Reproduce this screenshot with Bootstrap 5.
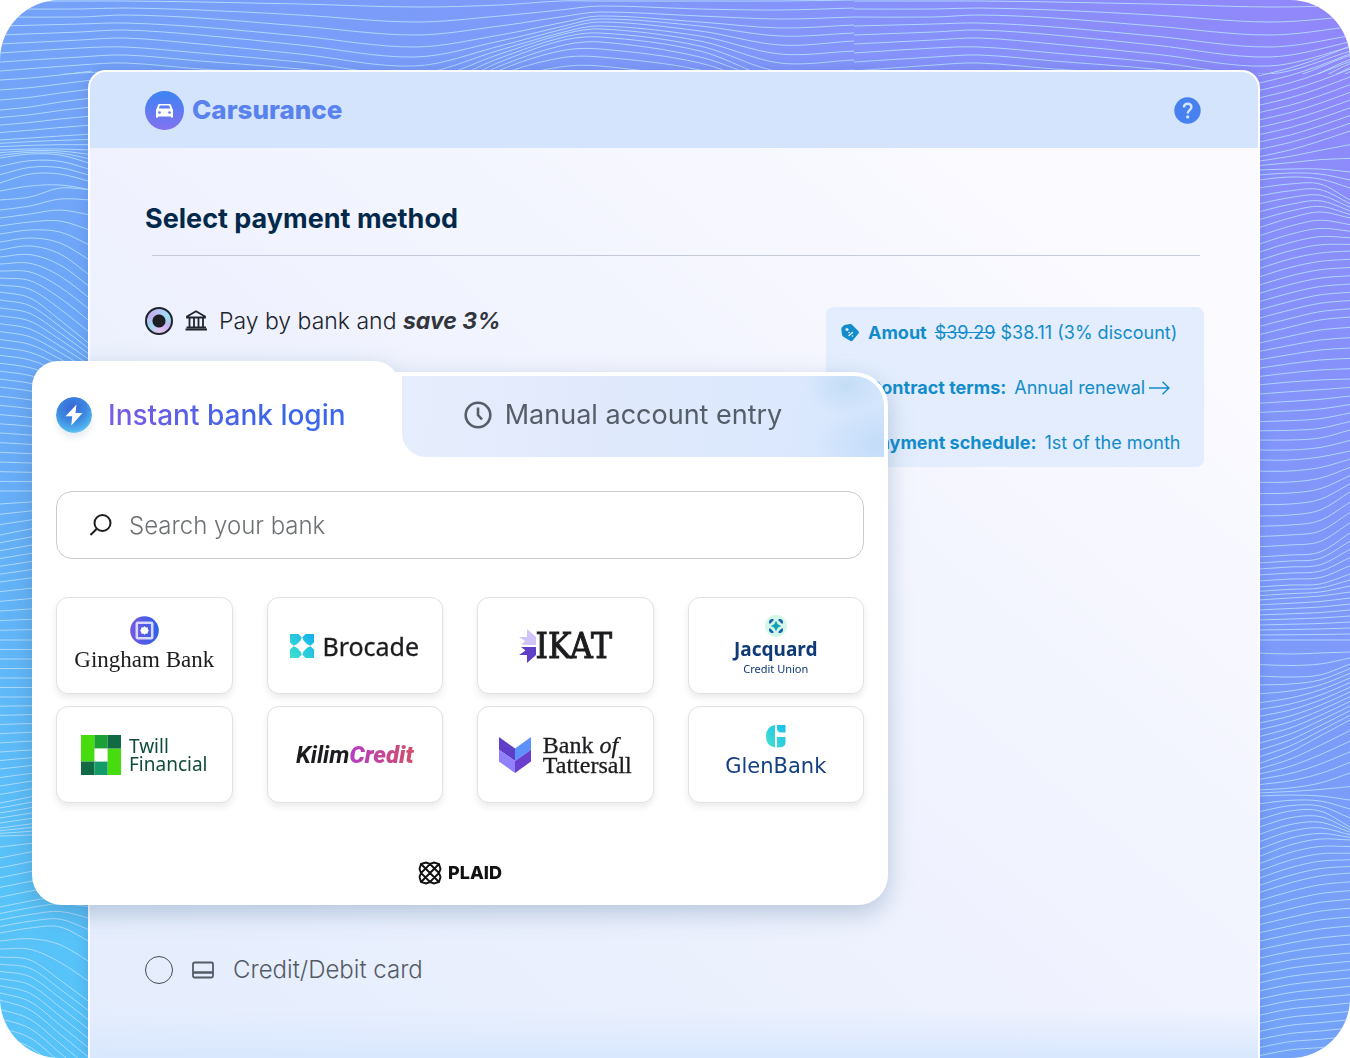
<!DOCTYPE html>
<html lang="en">
<head>
<meta charset="utf-8">
<meta name="viewport" content="width=device-width, initial-scale=1">
<title>Carsurance – Select payment method</title>
<link href="https://cdn.jsdelivr.net/npm/bootstrap@5.3.0/dist/css/bootstrap.min.css" rel="stylesheet">
<style>
  body { font-family: Inter, "Liberation Sans", sans-serif; background: #fff; color: #20242c; }
  button { font-family: inherit; }
  .stage { min-height: 100vh; padding: 70px 90px 0 88px; border-radius: 60px; overflow: hidden; isolation: isolate;
    background: linear-gradient(to bottom left, #9286fb 0%, #8098fa 28%, #74a2f8 50%, #6aabf8 70%, #57c3f8 92%); }
  .waves { inset: 0; width: 100%; height: 100%; z-index: -1; }
  .waves path { fill: none; stroke: #b8e0fd; stroke-opacity: .85; stroke-width: 1; }
  .sheet { min-height: calc(100vh - 70px); border: 2px solid #fff; border-bottom: 0; border-radius: 18px 18px 0 0;
    background: linear-gradient(to top, #d9e8fe 0, #d9e8fe00 50px), linear-gradient(to top right, #e4edfd 0%, #eff2fe 45%, #fafaff 85%);
    box-shadow: 0 0 14px #3c5fb040; }
  .topbar { height: 76px; padding: 0 57px 0 55px; background: #d4e4fd; border-radius: 16px 16px 0 0; }
  .brand { font: 800 26px/36px Inter, sans-serif; color: #5a82ee; }
  .content { padding: 49px 54px 0 55px; }
  .title { font: 700 27px/44px Inter, sans-serif; color: #03294a; }
  .rule { margin: 14px 4px 0 7px; border-top: 1px solid #b9bfd0; opacity: .8; }
  .method-row { height: 105px; padding-top: 51px; }
  .method { font-size: 23px; line-height: 26px; font-weight: 300; }
  .method .form-check-input { width: 28px; height: 28px; margin: 0; border: 1px solid #444b57; background-color: transparent; }
  .method .form-check-input:checked { border: 2px solid #20242c; box-shadow: none;
    background: radial-gradient(circle, #1c1f24 0 6px, transparent 7px), conic-gradient(#b9c4f4, #9be0f2, #c7b2f2, #e6c5ee, #9ad9f0, #c3b0f0, #b9c4f4); }
  .muted-method { font-size: 24px; color: #555b66; padding: 51px 0 72px; }
  .save { font-weight: 700; color: #33363d; }
  .terms { margin: 0 0 -105px; padding: 12px 14px; height: 160px; width: 378px; border-radius: 8px; color: #128cca;
    background: #e3edfd; font-size: 18px; line-height: 28px; gap: 27px; }
  .terms dt { font-weight: 700; }
  .terms dd { margin: 0; }
  .terms a { color: inherit; text-decoration: none; }
  .widget { margin-left: -113px; width: 856px; z-index: 1; filter: drop-shadow(0 8px 12px #41699150); }
  .tab { border: 0; line-height: 36px; }
  .tab-on { width: 368px; height: 96px; padding: 11px 24px 0; gap: 16px; background: #fff; border-radius: 26px 26px 0 0; font-size: 28px; font-weight: 500; }
  .tab-on .label { background: linear-gradient(90deg, #7a5be6, #4064e6 60%, #3c68ea); -webkit-background-clip: text; background-clip: text; color: transparent; }
  .bolt { width: 36px; height: 36px; border-radius: 50%; box-shadow: 0 5px 6px #5a7a9a22; }
  .tab-wrap { margin-left: -12px; padding: 4px 4px 0 14px; background: #fff; border-radius: 0 34px 0 0; height: 85px; }
  .tab-off { height: 81px; gap: 13px; padding: 0 40px 4px 0; color: #555d67; font-size: 27px; border-radius: 0 30px 0 24px;
    background: radial-gradient(40px 30px at 92% 12%, #c3ddf6, #c3ddf600), radial-gradient(70px 40px at 100% 85%, #c3dcf9, #c3dcf900), linear-gradient(100deg, #e6eefd 0%, #e2eafc 30%, #dbe8fd 80%, #d3e5fc 100%); }
  .pane { padding: 34px 24px 20px; background: #fff; border-radius: 0 0 30px 30px; }
  .search { height: 68px; border: 1px solid #c7cccd; border-radius: 16px; padding: 0 32px; gap: 15px; }
  .search input { border: 0; padding: 2px 0 0; font-size: 24px; font-weight: 300; background: none; box-shadow: none !important; }
  .search input::placeholder { color: #6d7173; }
  .banks { display: grid; grid-template-columns: repeat(4, 1fr); gap: 12px 34px; margin-top: 38px; }
  .bank { height: 97px; padding: 0; background: #fff; border: 1px solid #dfe1e3; border-radius: 12px; box-shadow: 0 4px 7px #00000014; color: #1b1c1e; }
  .gingham { font: 23px/30px "Liberation Serif", serif; }
  .brocade { font: 25px/36px "Noto Sans", sans-serif; -webkit-text-stroke: .3px; }
  .ikat { font: 35px/40px "DejaVu Serif Condensed", "DejaVu Serif", serif; -webkit-text-stroke: 1px; }
  .jacquard { font: 700 19px/24px "Noto Sans", sans-serif; color: #0e3a78; }
  .union { font: 11px/16px "Noto Sans", sans-serif; color: #0e3a78; }
  .twill { font: 19px/18px "Noto Sans", sans-serif; color: #0f4a3c; }
  .kilim { font: italic 700 24px/30px Roboto, sans-serif; }
  .kilim b { background: linear-gradient(90deg, #b63bc4, #d0506a); -webkit-background-clip: text; background-clip: text; color: transparent; }
  .tatter { font: 24px/20px "Liberation Serif", serif; -webkit-text-stroke: .3px; }
  .glen { font: 21px/28px "DejaVu Sans", sans-serif; color: #143f80; }
  .powered { margin-top: 58px; gap: 6px; font: 800 18px/24px Inter, sans-serif; color: #111; }
</style>
</head>
<body>
<main class="stage position-relative">
  <svg class="waves position-absolute" viewBox="0 0 1350 1058" preserveAspectRatio="none" aria-hidden="true">
    <defs>
      <clipPath id="tileA"><rect x="0" y="0" width="854" height="74"/></clipPath>
      <clipPath id="tileB"><rect x="854" y="0" width="496" height="74"/></clipPath>
    </defs>
    <g id="waveA" clip-path="url(#tileA)"></g>
    <g id="waveB" clip-path="url(#tileB)"></g>
    <g id="waveL"></g>
    <g id="waveR"></g>
  </svg>

  <div class="sheet d-flex flex-column">
    <header class="topbar d-flex align-items-center justify-content-between">
      <a href="#" class="d-flex align-items-center text-decoration-none gap-2">
        <svg width="39" height="39" viewBox="0 0 39 39" aria-hidden="true">
          <defs><linearGradient id="carBg" x2="0" y2="1"><stop stop-color="#3d84f4"/><stop offset="1" stop-color="#8272f0"/></linearGradient></defs>
          <circle cx="19.500" cy="19.500" r="19.500" fill="url(#carBg)"/>
          <path fill="#fff" d="M14.500 13h10q1.300 0 1.700 1.200l.9 3 .9 1.200v7.200q0 1.400-1 1.400t-1.200-1.400H13.200q-.2 1.400-1.200 1.400t-1-1.400v-7.200l.9-1.200.9-3Q13.200 13 14.500 13z"/>
          <path fill="#5c7df3" d="M14.800 14.600h9.400l.8 3H14z"/>
          <circle cx="14.500" cy="21.500" r="1.300" fill="#5c7df3"/><circle cx="24.500" cy="21.500" r="1.300" fill="#5c7df3"/>
        </svg>
        <span class="brand">Carsurance</span>
      </a>
      <button class="btn p-0 border-0 d-flex" aria-label="Help">
        <svg width="27" height="27" viewBox="0 0 27 27"><circle cx="13.500" cy="13.500" r="13.200" fill="#4781f0"/><path d="M9.800 10.300c.3-2.300 1.800-3.500 3.800-3.500 2.200 0 3.800 1.300 3.800 3.300 0 3.200-3.700 3-3.700 6.300" fill="none" stroke="#d4e4fd" stroke-width="2.400"/><circle cx="13.700" cy="19.900" r="1.700" fill="#d4e4fd"/></svg>
      </button>
    </header>

    <div class="content">
      <h1 class="title mb-0">Select payment method</h1>
      <hr class="rule">
      <div class="method-row d-flex justify-content-between align-items-start">
        <div class="method d-flex align-items-center">
          <input class="form-check-input" type="radio" name="method" id="byBank" checked>
          <label for="byBank" class="d-flex align-items-center">
            <svg class="mx-2" width="30" height="26" viewBox="0 0 30 26" fill="none" stroke="#20242c" stroke-width="1.800" aria-hidden="true"><path d="M6 8.500 15 3.200 24 8.500V9.500H6zM8.500 10v9M13 10v9M17.500 10v9M22 10v9M5.500 19.300h19.500M4.500 21.500h21.500"/></svg>
            <span>Pay by bank and <em class="save">save 3%</em></span>
          </label>
        </div>
        <dl class="terms d-flex flex-column">
          <div class="d-flex align-items-center">
            <svg class="me-2" width="20" height="20" viewBox="0 0 20 20" aria-hidden="true"><path d="M4.500 2 10 1q1-.2 1.800.6l6.700 6.600q1 1 .2 2l-6 7.300q-1 1.200-2.200.5L3 13.500q-.8-.7-1-1.700L1.300 6q-.1-1 .6-1.800z" fill="#128cca"/><circle cx="7" cy="6.500" r="1.600" fill="#e3edfd"/><path d="M9 12.500 12.500 9.500M9 9.500h.1M12.500 13h.1" stroke="#e3edfd" stroke-width="1.500" stroke-linecap="round"/></svg>
            <dt>Amout</dt><dd class="ms-2"><s>$39.29</s> $38.11 (3% discount)</dd>
          </div>
          <div class="d-flex align-items-center ps-4">
            <dt class="ms-1">Contract terms:</dt><dd class="ms-2"><a href="#" class="d-flex align-items-center">Annual renewal
              <svg class="ms-1" width="21" height="16" viewBox="0 0 21 16" fill="none" stroke="currentColor" stroke-width="1.400" aria-hidden="true"><path d="M0 8h20M13.500 1.800 20 8l-6.500 6.200"/></svg></a></dd>
          </div>
          <div class="d-flex align-items-center ps-4">
            <dt class="ms-1">Payment schedule:</dt><dd class="ms-2">1st of the month</dd>
          </div>
        </dl>
      </div>

      <section class="widget position-relative">
        <div class="d-flex align-items-end" role="tablist">
          <button class="tab tab-on d-flex align-items-center" role="tab" aria-selected="true">
            <svg class="bolt" viewBox="0 0 36 36" aria-hidden="true">
              <defs><radialGradient id="boltBg" cx=".45" cy=".3" r=".75"><stop stop-color="#3a66d8"/><stop offset=".5" stop-color="#3c87e0"/><stop offset=".85" stop-color="#52b4ee"/><stop offset="1" stop-color="#8fd6f6"/></radialGradient></defs>
              <circle cx="18" cy="18" r="18" fill="url(#boltBg)"/><path d="M20.500 7.500 9.500 19.300h6.700L15.300 28.500 26.500 16h-7z" fill="#fff"/></svg>
            <span class="label">Instant bank login</span>
          </button>
          <div class="tab-wrap flex-grow-1">
            <button class="tab tab-off d-flex align-items-center justify-content-center w-100" role="tab" aria-selected="false">
              <svg width="28" height="28" viewBox="0 0 28 28" fill="none" stroke="#555d67" stroke-width="2.600" aria-hidden="true"><circle cx="14" cy="14" r="12.300"/><path d="M14 6.500V14l4 4.500"/></svg>
              <span>Manual account entry</span>
            </button>
          </div>
        </div>
        <div class="pane">
          <div class="search d-flex align-items-center">
            <svg class="flex-shrink-0" width="25" height="25" viewBox="0 0 25 25" fill="none" stroke="#1c1e20" stroke-width="2" aria-hidden="true"><circle cx="13.500" cy="10" r="8"/><path d="M7.800 15.700 1.500 22"/></svg>
            <input type="search" class="form-control" placeholder="Search your bank" aria-label="Search your bank">
          </div>
          <div class="banks">
            <button class="bank d-flex flex-column align-items-center justify-content-center">
              <svg width="29" height="29" viewBox="0 0 29 29" aria-hidden="true"><defs><linearGradient id="gin"><stop stop-color="#7557e4"/><stop offset="1" stop-color="#2f62e6"/></linearGradient></defs><circle cx="14.500" cy="14.500" r="14.300" fill="url(#gin)"/><rect x="6.800" y="6.800" width="15.400" height="15.400" rx="1" fill="none" stroke="#d9d8fb" stroke-width="2.600"/><path d="m14.500 10.300 1.400 1.100 1.800-.2.100 1.700 1.100 1.600-1.100 1.600-.1 1.700-1.800-.2-1.400 1.100-1.400-1.100-1.800.2-.1-1.700-1.100-1.600 1.100-1.600.1-1.700 1.800.2z" fill="#fff"/></svg>
              <span class="gingham">Gingham Bank</span>
            </button>
            <button class="bank d-flex align-items-center justify-content-center gap-2">
              <svg width="24" height="24" viewBox="0 0 24 24" aria-hidden="true"><defs><linearGradient id="bro" gradientUnits="userSpaceOnUse" x1="24" y1="0" x2="0" y2="24"><stop stop-color="#12aef0"/><stop offset="1" stop-color="#3fe3cc"/></linearGradient></defs><path fill="url(#bro)" d="M0 0h8.500l3.300 3.500-1.500 3.300-3.500 3.500-3.300 1.500L0 8.500zM24 0h-8.500l-3.300 3.500 1.500 3.300 3.500 3.500 3.300 1.500L24 8.500zM0 24h8.500l3.300-3.500-1.500-3.300-3.500-3.500-3.300-1.500L0 15.500zM24 24h-8.500l-3.300-3.500 1.500-3.300 3.500-3.500 3.300-1.500 3.500 3.300z"/></svg>
              <span class="brocade">Brocade</span>
            </button>
            <button class="bank d-flex align-items-center justify-content-center">
              <svg width="17" height="34" viewBox="0 0 17 34" aria-hidden="true"><path fill="#cfc3f8" d="M8 0l9 8v8H9L2 15.500 6 12 0 8h8z"/><path fill="#5f3fc8" d="M17 18v8l-9 8v-8H0l6.500-4.500L2 18z"/></svg>
              <span class="ikat">IKAT</span>
            </button>
            <button class="bank d-flex flex-column align-items-center justify-content-center">
              <svg width="22" height="22" viewBox="0 0 22 22" aria-hidden="true"><circle cx="11" cy="11" r="11" fill="#d4f6e8"/><path fill="#12a0b4" d="m11 5.800 1.700 3.500 3.500 1.700-3.500 1.700L11 16.200l-1.700-3.500L5.800 11l3.500-1.700z"/><path fill="#1668a8" d="M4 8.500V6l2-2h2.500v1.500L5.500 8.500zM13.500 4H16l2 2v2.500h-1.500l-3-3zM18 13.500V16l-2 2h-2.500v-1.500l3-3zM8.500 18H6l-2-2v-2.500h1.500l3 3z"/></svg>
              <span class="jacquard">Jacquard</span><span class="union">Credit Union</span>
            </button>
            <button class="bank d-flex align-items-center justify-content-center gap-1">
              <svg width="40" height="40" viewBox="0 0 40 40" aria-hidden="true"><path fill="#46dc10" d="M0 0h13.400v26.600H0zM26.600 13.400H40V40H26.600z"/><path fill="#1ba035" d="M13.400 0h13.200v13.400H13.400z"/><path fill="#116a44" d="M26.600 0H40v13.400H26.600zM0 26.600h13.400V40H0z"/><path fill="#149c68" d="M13.400 26.600h13.200V40H13.400z"/></svg>
              <span class="twill text-start ms-1">Twill<br>Financial</span>
            </button>
            <button class="bank d-flex align-items-center justify-content-center"><span class="kilim">Kilim<b>Credit</b></span></button>
            <button class="bank d-flex align-items-center justify-content-center gap-2">
              <svg width="32" height="36" viewBox="0 0 32 36" aria-hidden="true"><path fill="#5f3fc8" d="M0 0l16 11.500V24L0 12.800z"/><path fill="#5c90fa" d="M32 0 16 11.500V24l16-11.200z"/><path fill="#9180fb" d="M0 12.800 16 24v12L0 24.500z"/><path fill="#6a3fd0" d="M32 12.800 16 24v12l16-11.500z"/></svg>
              <span class="tatter text-start ms-1">Bank <i>of</i><br>Tattersall</span>
            </button>
            <button class="bank d-flex flex-column align-items-center justify-content-center">
              <svg width="20" height="23" viewBox="0 0 20 23" aria-hidden="true"><defs><linearGradient id="gle" x1="1" x2="0" y2="1"><stop stop-color="#18bff0"/><stop offset="1" stop-color="#46e2cc"/></linearGradient></defs><path fill="url(#gle)" d="M9 0v22.500Q0 21 0 11.200T9 0zM11 0h8.500v7.500H14q-3-1-3-4zM11 12h8.500v6q0 4.500-8.500 4.500z"/></svg>
              <span class="glen mt-1 mb-1">GlenBank</span>
            </button>
          </div>
          <div class="powered d-flex align-items-center justify-content-center">
            <svg width="24" height="24" viewBox="0 0 24 24" fill="none" stroke="#111" stroke-width="1.900" aria-hidden="true"><path d="M3 3 8 1.500l4 1.500 4-1.500L21 3l1.500 5-1.500 4 1.500 4-1.500 5-5 1.500-4-1.500-4 1.500L3 21l-1.500-5L3 12 1.500 8zM3 3l18 18M21 3 3 21M12 3l9 9-9 9-9-9z"/></svg>
            <span>PLAID</span>
          </div>
        </div>
      </section>

      <div class="method muted-method d-flex align-items-center">
        <input class="form-check-input" type="radio" name="method" id="byCard">
        <label for="byCard" class="d-flex align-items-center">
          <svg class="mx-3" width="28" height="24" viewBox="0 0 28 24" fill="none" stroke="#555b66" stroke-width="1.800" aria-hidden="true"><rect x="4" y="4.500" width="20" height="15" rx="1.500"/><path d="M4 14.500h20" stroke-width="2.600"/></svg>
          <span>Credit/Debit card</span>
        </label>
      </div>
    </div>
  </div>
</main>
<script src="https://cdn.jsdelivr.net/npm/bootstrap@5.3.0/dist/js/bootstrap.bundle.min.js"></script>
<script>
  // Smooth path through points (Catmull-Rom to Bezier)
  function curve(xs, ys) {
    let d = `M${xs[0]} ${ys[0]}`;
    for (let i = 0; i < xs.length - 1; i++) {
      const h = (xs[i + 1] - xs[i]) / 3;
      const slope = k => {
        const a = Math.max(k - 1, 0), b = Math.min(k + 1, xs.length - 1);
        return (ys[b] - ys[a]) / (xs[b] - xs[a]);
      };
      d += `C${xs[i] + h} ${ys[i] + slope(i) * h} ${xs[i + 1] - h} ${ys[i + 1] - slope(i + 1) * h} ${xs[i + 1]} ${ys[i + 1]}`;
    }
    return d;
  }
  function add(id, xs, ys) {
    const p = document.createElementNS('http://www.w3.org/2000/svg', 'path');
    p.setAttribute('d', curve(xs, ys));
    document.getElementById(id).appendChild(p);
  }
  // Top band: y of each line at every x
  const bx = [0, 80, 125, 200, 300, 415, 500, 560, 600, 700, 780, 854];
  const bands = [
    [1, 1, 1, 2, 4, 7, 5, 1, 1, 1, 1, 0],
    [9, 9, 8, 10, 15, 22, 16, 10, 6, 9, 10, 8],
    [17, 17, 15, 18, 26, 35, 26, 17, 12, 16, 19, 17],
    [26, 24, 23, 27, 36, 47, 35, 23, 16, 22, 28, 25],
    [35, 32, 30, 35, 45, 57, 41, 27, 19, 26, 36, 33],
    [44, 40, 38, 44, 54, 66, 46, 30, 22, 31, 45, 41],
    [53, 48, 47, 53, 62, 74, 50, 33, 26, 36, 54, 51],
    [62, 57, 55, 61, 69, 82, 54, 35, 29, 41, 63, 60],
    [71, 65, 63, 69, 76, 90, 58, 38, 33, 46, 72, 70],
    [80, 73, 72, 78, 86, 98, 62, 41, 37, 51, 80, 80],
    [90, 82, 80, 86, 95, 104, 66, 46, 42, 57, 84, 90],
    [99, 90, 90, 95, 104, 110, 70, 51, 49, 63, 90, 99],
    [110, 99, 99, 104, 112, 116, 75, 58, 57, 70, 96, 110],
    [120, 110, 110, 114, 120, 122, 82, 67, 66, 80, 102, 120]
  ];
  bands.forEach(y => { add('waveA', bx, y); add('waveB', bx.map(x => x + 854), y); });
  // Side strips: key curves and the number of steps to the next one
  function strip(id, xs, keys) {
    keys.forEach(([y, n], k) => {
      const next = keys[k + 1];
      if (!next) return;
      for (let i = 0; i < n; i++) add(id, xs, y.map((v, j) => v + (next[0][j] - v) * i / n));
    });
  }
  strip('waveL', [0, 30, 60, 92], [
    [[80, 78, 75, 71], 3], [[110, 107, 102, 98], 4], [[140, 138, 136, 134], 3], [[150, 149, 149, 150], 3],
    [[158, 154, 155, 164], 3], [[183, 174, 174, 182], 1], [[191, 186, 185, 190], 1], [[200, 197, 188, 190], 1],
    [[210, 206, 199, 200], 5], [[250, 246, 254, 277], 6], [[292, 298, 320, 346], 12], [[387, 391, 398, 408], 5],
    [[433, 435, 438, 444], 6], [[491, 491, 491, 491], 1], [[504, 502, 501, 500], 3], [[535, 529, 524, 518], 6],
    [[582, 578, 574, 570], 6], [[640, 640, 640, 640], 6], [[697, 697, 697, 697], 6], [[752, 750, 749, 748], 6],
    [[803, 797, 790, 783], 5], [[828, 824, 820, 815], 3], [[836, 835, 832, 828], 2], [[858, 852, 846, 840], 5],
    [[907, 901, 896, 895], 4], [[933, 928, 927, 943], 3], [[957, 960, 980, 1004], 6], [[1000, 1010, 1034, 1060], 7],
    [[1065, 1075, 1100, 1130], 1]
  ]);
  strip('waveR', [1258, 1290, 1320, 1350], [
    [[76, 68, 58, 46], 11], [[157, 150, 141, 131], 3], [[170, 169, 169, 172], 2], [[180, 177, 179, 188], 1],
    [[188, 184, 184, 200], 5], [[228, 218, 212, 218], 5], [[269, 259, 253, 251], 8], [[335, 327, 320, 317], 6],
    [[385, 382, 380, 379], 6], [[440, 440, 438, 430], 2], [[460, 460, 457, 451], 5], [[516, 515, 510, 492], 4],
    [[557, 555, 552, 533], 5], [[587, 585, 584, 574], 3], [[600, 598, 596, 592], 8], [[640, 640, 640, 640], 1],
    [[653, 654, 653, 652], 2], [[676, 677, 675, 664], 3], [[703, 698, 690, 678], 9], [[764, 752, 736, 720], 5],
    [[790, 788, 783, 773], 2], [[796, 795, 796, 800], 3], [[820, 811, 811, 827], 5], [[857, 845, 839, 840], 5],
    [[893, 883, 876, 873], 5], [[933, 926, 920, 917], 4], [[967, 960, 956, 953], 12], [[1064, 1058, 1056, 1053], 1]
  ]);
</script>
</body>
</html>
